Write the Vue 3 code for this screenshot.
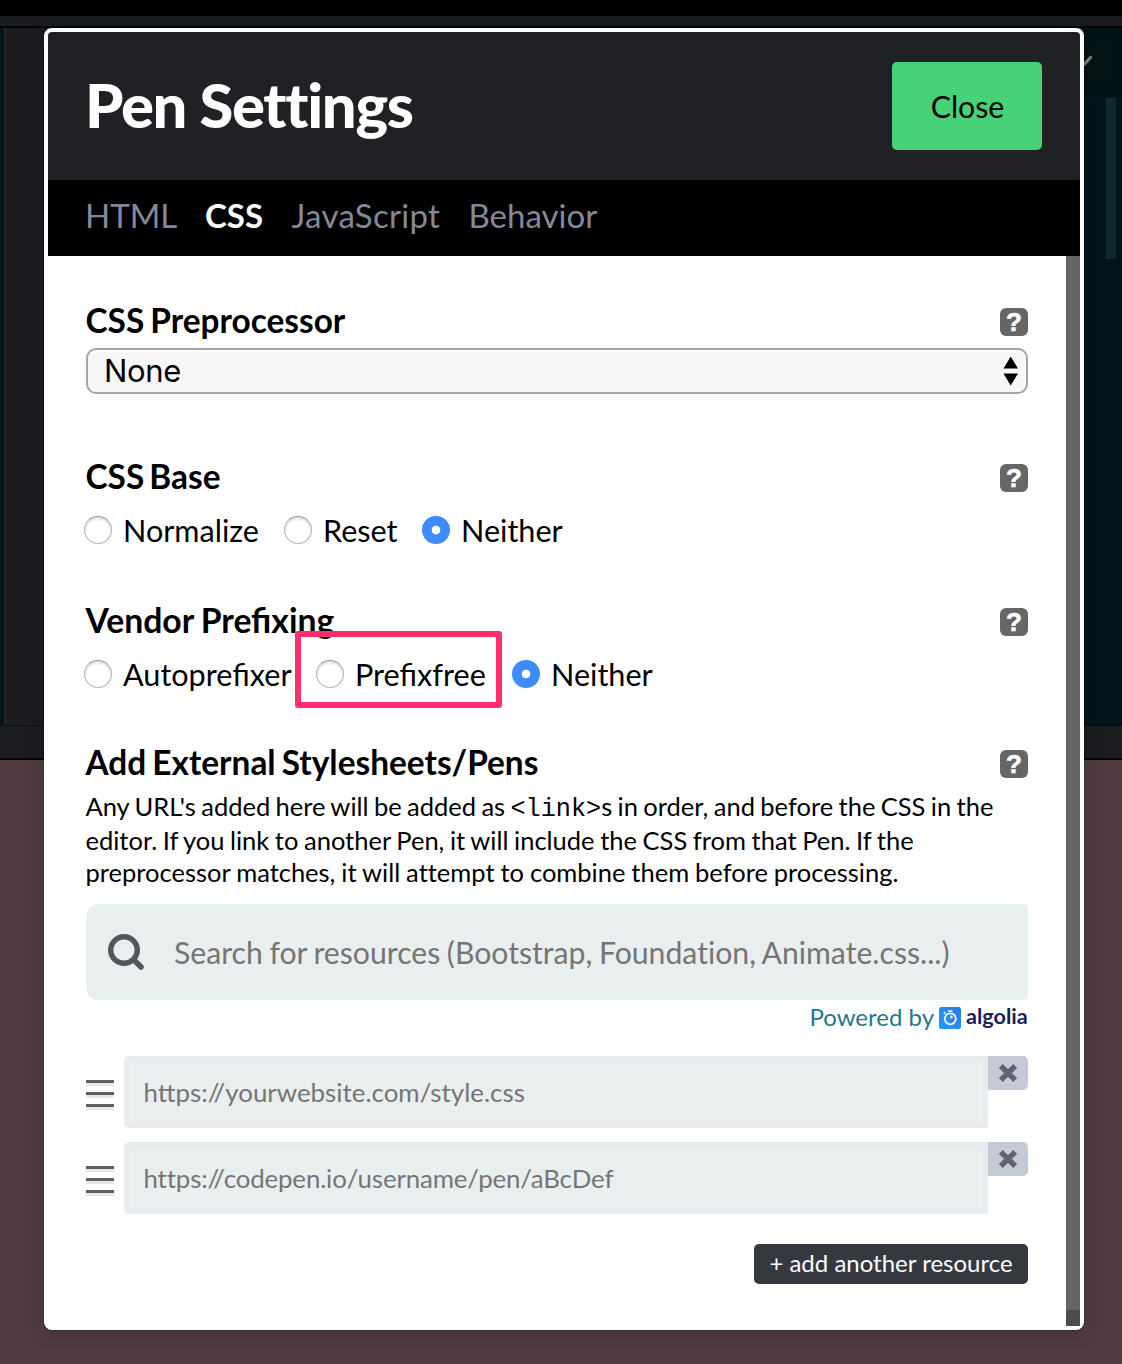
<script setup>
import { ref } from 'vue'

const tabs = ['HTML', 'CSS', 'JavaScript', 'Behavior']
const activeTab = ref('CSS')
const base = ref('Neither')
const prefixing = ref('Neither')
const resources = ['https://yourwebsite.com/style.css', 'https://codepen.io/username/pen/aBcDef']
</script>

<template>
  <div class="page">
    <div class="backdrop">
      <div class="top-black"></div>
      <div class="top-bar"></div>
      <div class="editors">
        <div class="code-left"></div>
        <div class="resizer"></div>
        <div class="code-right">
          <div class="code-head">
            <span class="drop"><svg width="26" height="40" viewBox="0 0 26 40"><path d="M-4 18 L.5 22 L6.500 15.500" fill="none" stroke="#85807e" stroke-width="3.200" stroke-linecap="round" /></svg></span>
          </div>
          <div class="code-scroll"></div>
        </div>
      </div>
      <div class="console"></div>
      <div class="preview"></div>
    </div>

    <div class="modal">
      <header class="head">
        <h1>Pen Settings</h1>
        <button class="close">Close</button>
      </header>
      <nav class="tabs">
        <a v-for="t in tabs" :key="t" :class="['tab', 'tab-' + t.toLowerCase(), { active: t === activeTab }]" @click="activeTab = t">{{ t }}</a>
      </nav>
      <div class="body">
        <main class="content">
          <section class="s1">
            <div class="row"><h2>CSS Preprocessor</h2><span class="help">?</span></div>
            <div class="select">
              <span>None</span>
              <svg width="16" height="30" viewBox="0 0 16 30"><path d="M7.700 .5 15 12.500H.5zM.5 17.500H15L7.700 29.500z" /></svg>
            </div>
          </section>
          <section class="s2">
            <div class="row"><h2 class="h-base">CSS Base</h2><span class="help">?</span></div>
            <div class="radios">
              <label class="w200" @click="base = 'Normalize'"><i :class="{ on: base === 'Normalize' }"></i>Normalize</label>
              <label class="w138" @click="base = 'Reset'"><i :class="{ on: base === 'Reset' }"></i>Reset</label>
              <label @click="base = 'Neither'"><i :class="{ on: base === 'Neither' }"></i>Neither</label>
            </div>
          </section>
          <section class="s3">
            <div class="row"><h2 class="h-vendor">Vendor Prefixing</h2><span class="help">?</span></div>
            <div class="radios">
              <label class="w232" @click="prefixing = 'Autoprefixer'"><i :class="{ on: prefixing === 'Autoprefixer' }"></i>Autoprefixer</label>
              <label class="w196 marked" @click="prefixing = 'Prefixfree'"><i :class="{ on: prefixing === 'Prefixfree' }"></i>Prefixfree</label>
              <label @click="prefixing = 'Neither'"><i :class="{ on: prefixing === 'Neither' }"></i>Neither</label>
            </div>
          </section>
          <section class="s4">
            <div class="row"><h2>Add External Stylesheets/Pens</h2><span class="help">?</span></div>
            <p class="desc">
              <span class="l1">Any URL's added here will be added as <code>&lt;link&gt;</code>s in order, and before the CSS in the</span>
              <span class="l2">editor. If you link to another Pen, it will include the CSS from that Pen. If the</span>
              <span class="l3">preprocessor matches, it will attempt to combine them before processing.</span>
            </p>
            <div class="search">
              <svg width="40" height="40" viewBox="0 0 40 40" fill="none" stroke="#50585a"><circle cx="18" cy="18" r="13.300" stroke-width="5.400" /><path d="M28 28 35 35" stroke-width="5.600" stroke-linecap="round" /></svg>
              <span>Search for resources (Bootstrap, Foundation, Animate.css...)</span>
            </div>
            <div class="powered">
              <span class="by">Powered by</span>
              <svg class="logo" width="22" height="22" viewBox="0 0 22 22">
                <defs><linearGradient id="alg" x1="0" y1="1" x2="1" y2="0"><stop offset="0" stop-color="#1ba0ff" /><stop offset="1" stop-color="#2f75ee" /></linearGradient></defs>
                <rect width="22" height="22" rx="2.500" fill="url(#alg)" />
                <circle cx="11.300" cy="11.800" r="5.500" fill="none" stroke="#fff" stroke-width="1.700" />
                <path d="M9.200 3.200h4.200v1.800H9.200zM11.300 8.600v3.200l2.900-1.500a3.200 3.200 0 0 0-2.900-1.700z" fill="#fff" />
                <path d="M5 6.700 6.500 5.200" stroke="#fff" stroke-width="1.700" />
              </svg>
              <span class="algolia">algolia</span>
            </div>
            <div v-for="(r, i) in resources" :key="r" class="resource">
              <div class="grip"><b></b><b></b><b></b></div>
              <div :class="['field', 'field' + i]">{{ r }}</div>
              <button class="remove"><svg width="20" height="20" viewBox="0 0 20 20"><path d="M2.800 3 17.200 17M17.200 3 2.800 17" stroke="#61636f" stroke-width="5.400" /></svg></button>
            </div>
            <div class="actions"><button class="add">+ add another resource</button></div>
          </section>
        </main>
        <div class="scroll"><div class="thumb"></div></div>
      </div>
    </div>
  </div>
</template>

<style>
body { margin: 0; background: #513c41; }
</style>

<style scoped>
*, *::after { box-sizing: border-box; }
.page { position: relative; width: 1122px; height: 1364px; overflow: hidden; font-family: Lato, sans-serif; color: #000; padding: 28px 38px 34px 44px; white-space: nowrap; }
.backdrop { position: absolute; inset: 0; display: flex; flex-direction: column; }
.top-black { height: 16px; background: #000; }
.top-bar { height: 10px; background: #1b1c20; }
.editors { height: 699px; display: flex; background: #01151a; border-top: 2px solid #020506; }
.code-left { width: 4px; }
.resizer { width: 1080px; background: #1b1c20; border-left: 2px solid #242528; }
.code-right { flex: 1; display: flex; flex-direction: column; align-items: flex-end; }
.code-head { width: 38px; height: 70px; border-bottom: 1px solid #04191f; background: #011216; padding-top: 14px; }
.drop { display: block; width: 28px; height: 40px; background: #051414; border-radius: 0 4px 4px 0; }
.code-scroll { width: 10px; height: 161px; margin-right: 6px; background: #10282e; }
.console { height: 35px; background: #1c1d21; border-top: 1px solid #0c0d0f; border-bottom: 2px solid #000; }
.preview { flex: 1; background: #513c41; }
.modal { position: relative; width: 1040px; height: 1302px; border: 4px solid #fff; border-radius: 8px; background: #fff; display: flex; flex-direction: column; box-shadow: 0 4px 18px rgba(0, 0, 0, .2), 0 0 2px rgba(0, 0, 0, .5); }
.head { height: 148px; background: #202125; border-radius: 4px 4px 0 0; display: flex; align-items: center; justify-content: space-between; padding: 0 38px 0 37px; }
h1 { margin: -5px 0 0; color: #fff; font-size: 61.500px; line-height: 70px; font-weight: 900; letter-spacing: -1.300px; font-feature-settings: "liga" 0; }
button { border: 0; font-family: inherit; padding: 0; }
.close { width: 150px; height: 88px; border-radius: 5px; background: #48d277; color: #000; font-size: 30.300px; padding: 0 0 1px 1px; }
.tabs { height: 76px; background: #000; display: flex; padding-left: 37px; color: #868899; font-size: 33px; line-height: 70px; }
.tab-html { width: 120px; }
.tab-css { width: 86.500px; }
.tab-javascript { width: 177px; letter-spacing: .3px; }
.active { color: #fff; font-weight: 700; }
.body { flex: 1; display: flex; }
.content { width: 1018px; padding: 45px 38px 0; }
.scroll { width: 14px; height: 1070px; background: #4c4c4c; }
.thumb { height: 1054px; background: #666; }
section { display: flex; flex-direction: column; }
.s1 { height: 156px; }
.s2 { height: 144px; }
.s3 { height: 142px; }
.row { height: 36px; display: flex; justify-content: space-between; }
h2 { margin: 0 0 0 -.500px; font-size: 33.400px; line-height: 38px; font-weight: 700; word-spacing: -2px; }
.h-base { word-spacing: -3px; }
.h-vendor { font-size: 33.700px; word-spacing: -1px; }
.help { width: 28px; height: 28px; margin-top: 7px; background: #666; color: #fff; border-radius: 6px; font: bold 26px/29px "Liberation Sans", sans-serif; text-align: center; -webkit-text-stroke: .6px #fff; }
.select { margin-top: 11px; height: 46px; border: 2px solid #a5a5a5; border-radius: 10px; background: #f7f7f7; display: flex; align-items: center; justify-content: space-between; padding: 0 7px 0 16px; font: 31px/42px Inter, sans-serif; letter-spacing: -.3px; }
.radios { margin: 14px 0 0 -2px; height: 48px; display: flex; align-items: center; font-size: 30.600px; line-height: 48px; }
.radios label { display: flex; align-items: center; height: 48px; }
.radios i { width: 28px; height: 28px; margin: -3px 11px 0 0; border-radius: 50%; border: 1px solid #b4b4b4; border-top-color: #999; background: #fff; box-shadow: inset 0 2px 3px rgba(0, 0, 0, .14); }
.radios i.on { border: 0; box-shadow: none; background: radial-gradient(circle, #fff 0 4px, #3d8bff 4.700px); }
.w200 { width: 200px; }
.w138 { width: 138px; }
.w232 { width: 232px; }
.w196 { width: 196px; }
.marked { position: relative; }
.marked::after { content: ""; position: absolute; left: -21px; top: -20px; width: 207px; height: 77px; border: 6px solid #ff2f6d; border-radius: 3px; }
.desc { margin: 11px 0 0 -.5px; height: 114px; font-size: 25.500px; line-height: 33px; display: flex; flex-direction: column; }
.desc span { height: 33px; }
.desc .l1 { height: 34px; word-spacing: -1.150px; }
.desc .l2 { height: 32px; word-spacing: -.950px; }
.l3 { word-spacing: -.600px; font-feature-settings: "liga" 0; }
code { font: 25.200px/20px "Liberation Mono", monospace; }
.search { height: 96px; background: #e9efef; border-radius: 12px 5px 5px 12px; display: flex; align-items: center; padding-left: 20px; font-size: 30.200px; color: #757575; }
.search span { margin-left: 28px; word-spacing: -1.200px; font-feature-settings: "liga" 0; }
.powered { height: 56px; display: flex; justify-content: flex-end; align-items: flex-start; line-height: 34px; }
.by { color: #24788b; font-size: 24px; }
.logo { margin: 7px 5px 0 5px; }
.algolia { width: 62px; font: 700 21.600px/33px Lato, sans-serif; color: #182359; }
.resource { display: flex; height: 72px; margin-bottom: 14px; align-items: flex-start; }
.grip { width: 38px; padding-top: 24px; }
.grip b { display: block; width: 28px; height: 3px; margin-bottom: 9px; background: #606060; box-shadow: 0 3px 0 #e6e6e6; }
.field { width: 864px; height: 72px; border: 6px solid #e8ecef; border-radius: 5px 0 0 5px; background: #e9efef; padding: 1px 0 0 13.500px; font-size: 25.900px; line-height: 58px; color: #757575; }
.field1 { letter-spacing: -.160px; }
.remove { width: 40px; height: 34px; background: #c5c8d5; border-radius: 0 5px 5px 0; display: flex; align-items: center; justify-content: center; }
.actions { display: flex; justify-content: flex-end; padding-top: 16px; }
.add { width: 274px; height: 40px; border-radius: 5px; background: #363840; color: #fff; font-size: 24px; padding-bottom: 3px; }
</style>
